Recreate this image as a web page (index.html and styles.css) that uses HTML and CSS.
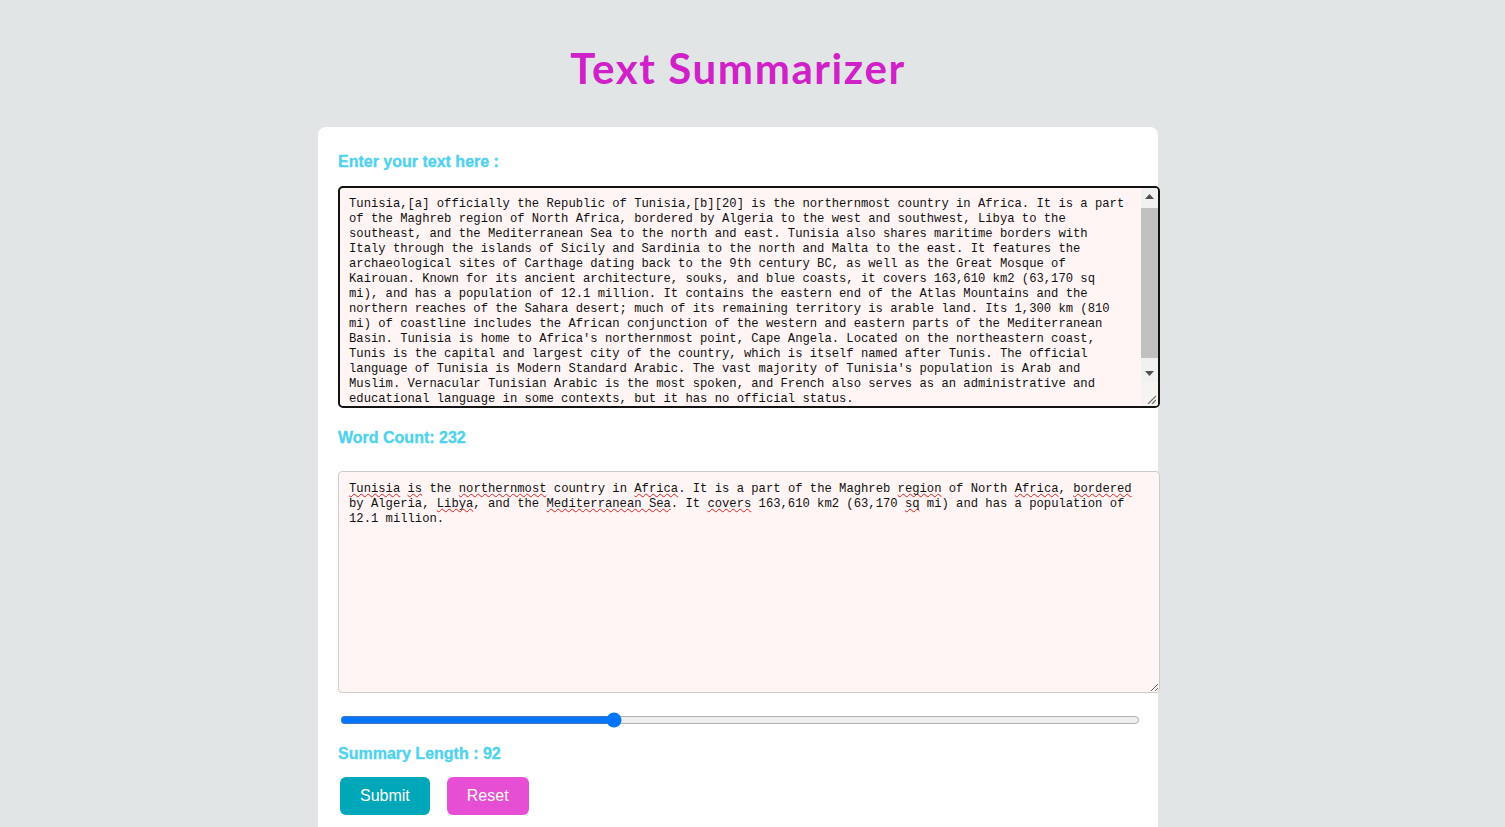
FILE: index.html
```html
<!DOCTYPE html>
<html lang="en">
<head>
<meta charset="utf-8">
<title>Text Summarizer</title>
<link rel="stylesheet" href="styles.css">
</head>
<body>
<main class="page">
  <h1 class="title">Text Summarizer</h1>
  <section class="card">
    <label class="label label-first" for="src">Enter your text here :</label>
    <div class="editor">
      <textarea id="src" class="editor-text" spellcheck="false">Tunisia,[a] officially the Republic of Tunisia,[b][20] is the northernmost country in Africa. It is a part of the Maghreb region of North Africa, bordered by Algeria to the west and southwest, Libya to the southeast, and the Mediterranean Sea to the north and east. Tunisia also shares maritime borders with Italy through the islands of Sicily and Sardinia to the north and Malta to the east. It features the archaeological sites of Carthage dating back to the 9th century BC, as well as the Great Mosque of Kairouan. Known for its ancient architecture, souks, and blue coasts, it covers 163,610 km2 (63,170 sq mi), and has a population of 12.1 million. It contains the eastern end of the Atlas Mountains and the northern reaches of the Sahara desert; much of its remaining territory is arable land. Its 1,300 km (810 mi) of coastline includes the African conjunction of the western and eastern parts of the Mediterranean Basin. Tunisia is home to Africa's northernmost point, Cape Angela. Located on the northeastern coast, Tunis is the capital and largest city of the country, which is itself named after Tunis. The official language of Tunisia is Modern Standard Arabic. The vast majority of Tunisia's population is Arab and Muslim. Vernacular Tunisian Arabic is the most spoken, and French also serves as an administrative and educational language in some contexts, but it has no official status.</textarea>
      <div class="sbar" aria-hidden="true">
        <div class="sbar-btn">
          <svg width="9" height="5" viewBox="0 0 9 5"><polygon points="4.5,0 9,5 0,5" fill="#505050"/></svg>
        </div>
        <div class="sbar-track"><div class="sbar-thumb"></div></div>
        <div class="sbar-btn">
          <svg width="9" height="5" viewBox="0 0 9 5"><polygon points="0,0 9,0 4.5,5" fill="#505050"/></svg>
        </div>
        <div class="sbar-corner">
          <svg width="9" height="9" viewBox="0 0 9 9"><path d="M1 9 L9 1 M5 9 L9 5" stroke="#6e6e6e" stroke-width="1.2"/></svg>
        </div>
      </div>
    </div>
    <p class="label label-count">Word Count: 232</p>
    <div class="output" role="textbox" aria-multiline="true"><span class="sp">Tunisia</span> <span class="sp">is</span> the <span class="sp">northernmost</span> country in <span class="sp">Africa</span>. It is a part of the Maghreb <span class="sp">region</span> of North <span class="sp">Africa</span>, <span class="sp">bordered</span> by Algeria, <span class="sp">Libya</span>, and the <span class="sp">Mediterranean Sea</span>. It <span class="sp">covers</span> 163,610 km2 (63,170 <span class="sp">sq</span> mi) and has a population of 12.1 million.</div>
    <input class="range" type="range" min="0" max="271" value="92" aria-label="Summary length">
    <p class="label label-length">Summary Length : 92</p>
    <div class="actions">
      <button class="btn btn-submit" type="button">Submit</button>
      <button class="btn btn-reset" type="button">Reset</button>
    </div>
  </section>
</main>
</body>
</html>
```
FILE: styles.css
```css
html, body {
  margin: 0;
  padding: 0;
  background: #e1e5e6;
  overflow: hidden;
  height: 827px;
}

.page {
  display: flex;
  flex-direction: column;
  align-items: center;
  padding-right: 29px;
}

.title {
  flex-shrink: 0;
  margin: 40px 0 0 0;
  height: 87px;
  font-family: "Comic Sans MS", "Lato", "Noto Sans", sans-serif;
  font-weight: 700;
  font-size: 42px;
  line-height: 56px;
  letter-spacing: 1.6px;
  color: #d021c9;
}

.card {
  flex-shrink: 0;
  width: 800px;
  padding: 20px 20px 40px;
  background: #ffffff;
  border-radius: 8px;
  display: flex;
  flex-direction: column;
  align-items: flex-start;
}

.label {
  margin: 0;
  font-family: "Liberation Sans", Arial, sans-serif;
  font-weight: 700;
  font-size: 16px;
  line-height: 18px;
  color: #4fd2ee;
  -webkit-text-stroke: 0.35px #4fd2ee;
}

.label-first { margin-top: 6px; margin-bottom: 15px; }
.label-count { margin-top: 21px; margin-bottom: 24px; }
.label-length { margin-top: 17px; margin-bottom: 14px; }

.editor {
  display: flex;
  width: 818px;
  height: 218px;
  border: 2px solid #131313;
  border-radius: 5px;
  background: #fff5f5;
  overflow: hidden;
  flex-shrink: 0;
}

.editor-text {
  flex: 1;
  min-width: 0;
  margin: 0;
  padding: 9px 12px 9px 9px;
  border: none;
  outline: none;
  background: transparent;
  resize: none;
  overflow: hidden;
  font-family: "Liberation Mono", "DejaVu Sans Mono", monospace;
  font-size: 12.2px;
  line-height: 15px;
  color: #111111;
}

.sbar {
  width: 17px;
  display: flex;
  flex-direction: column;
  background: #f1f1f1;
}

.sbar-btn {
  height: 17px;
  display: flex;
  align-items: center;
  justify-content: center;
  flex-shrink: 0;
}

.sbar-track {
  height: 160px;
  padding-top: 3px;
  box-sizing: border-box;
}

.sbar-thumb {
  height: 150px;
  background: #c1c1c1;
}

.sbar-corner {
  flex: 1;
  display: flex;
  align-items: flex-end;
  justify-content: flex-end;
  padding: 0 2px 2px 0;
  background: #f8f3f3;
}

.sbar-corner svg { display: block; }

.output {
  width: 800px;
  height: 200px;
  padding: 10px;
  border: 1px solid #cccccc;
  border-radius: 4px;
  background: #fff5f5;
  font-family: "Liberation Mono", "DejaVu Sans Mono", monospace;
  font-size: 12.2px;
  line-height: 15px;
  color: #111111;
  resize: vertical;
  overflow: auto;
  flex-shrink: 0;
  white-space: pre-wrap;
  overflow-wrap: break-word;
}

.sp {
  text-decoration: underline wavy #e0201d;
  text-decoration-thickness: 1px;
  text-underline-offset: 1px;
  text-decoration-skip-ink: none;
}

.range {
  width: 800px;
  margin: 19px 0 0 2px;
  height: 16px;
  accent-color: #0075ff;
}

.actions {
  display: flex;
  gap: 17px;
  margin-left: 2px;
}

.btn {
  height: 38px;
  padding: 0 20px;
  border: none;
  border-radius: 6px;
  font-family: "Liberation Sans", Arial, sans-serif;
  font-size: 16px;
  color: #ffffff;
  cursor: pointer;
}

.btn-submit { background: #00a7b9; }
.btn-reset { background: #e64fd3; }
```
